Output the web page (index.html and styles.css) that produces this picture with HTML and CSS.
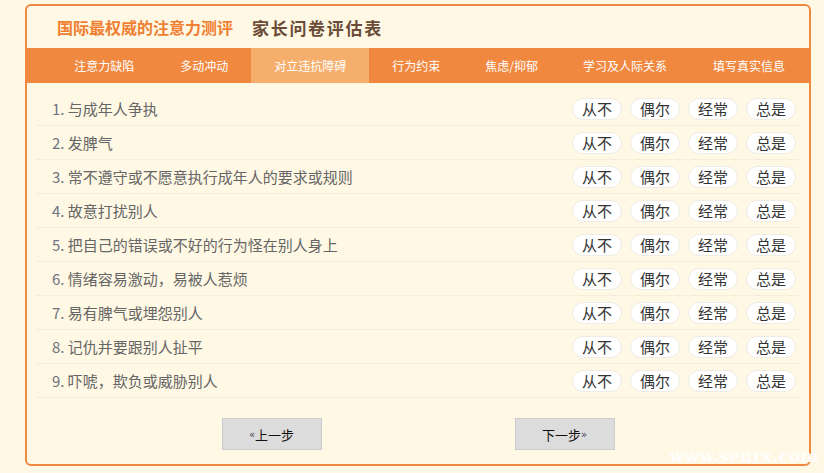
FILE: index.html
```html
<!DOCTYPE html>
<html lang="zh">
<head>
<meta charset="utf-8">
<title>家长问卷评估表</title>
<link rel="stylesheet" href="styles.css">
</head>
<body>
<div class="card">
  <div class="header">
    <span class="brand">国际最权威的注意力测评</span>
    <span class="title">家长问卷评估表</span>
  </div>
  <div class="nav">
    <span class="tab">注意力缺陷</span>
    <span class="tab">多动冲动</span>
    <span class="tab active">对立违抗障碍</span>
    <span class="tab">行为约束</span>
    <span class="tab tight">焦虑/抑郁</span>
    <span class="tab">学习及人际关系</span>
    <span class="tab">填写真实信息</span>
  </div>
  <div class="list">
    <div class="row"><span class="q"><span class="num">1.</span> 与成年人争执</span><span class="opts"><span class="pill">从不</span><span class="pill">偶尔</span><span class="pill">经常</span><span class="pill">总是</span></span></div>
    <div class="row"><span class="q"><span class="num">2.</span> 发脾气</span><span class="opts"><span class="pill">从不</span><span class="pill">偶尔</span><span class="pill">经常</span><span class="pill">总是</span></span></div>
    <div class="row"><span class="q"><span class="num">3.</span> 常不遵守或不愿意执行成年人的要求或规则</span><span class="opts"><span class="pill">从不</span><span class="pill">偶尔</span><span class="pill">经常</span><span class="pill">总是</span></span></div>
    <div class="row"><span class="q"><span class="num">4.</span> 故意打扰别人</span><span class="opts"><span class="pill">从不</span><span class="pill">偶尔</span><span class="pill">经常</span><span class="pill">总是</span></span></div>
    <div class="row"><span class="q"><span class="num">5.</span> 把自己的错误或不好的行为怪在别人身上</span><span class="opts"><span class="pill">从不</span><span class="pill">偶尔</span><span class="pill">经常</span><span class="pill">总是</span></span></div>
    <div class="row"><span class="q"><span class="num">6.</span> 情绪容易激动，易被人惹烦</span><span class="opts"><span class="pill">从不</span><span class="pill">偶尔</span><span class="pill">经常</span><span class="pill">总是</span></span></div>
    <div class="row"><span class="q"><span class="num">7.</span> 易有脾气或埋怨别人</span><span class="opts"><span class="pill">从不</span><span class="pill">偶尔</span><span class="pill">经常</span><span class="pill">总是</span></span></div>
    <div class="row"><span class="q"><span class="num">8.</span> 记仇并要跟别人扯平</span><span class="opts"><span class="pill">从不</span><span class="pill">偶尔</span><span class="pill">经常</span><span class="pill">总是</span></span></div>
    <div class="row"><span class="q"><span class="num">9.</span> 吓唬，欺负或威胁别人</span><span class="opts"><span class="pill">从不</span><span class="pill">偶尔</span><span class="pill">经常</span><span class="pill">总是</span></span></div>
  </div>
  <div class="footer">
    <button class="btn"><span class="arr">«</span>上一步</button>
    <button class="btn">下一步<span class="arr">»</span></button>
  </div>
  <div class="watermark">www.senrx.com</div>
</div>
</body>
</html>
```
FILE: styles.css
```css
html, body {
  margin: 0;
  padding: 0;
  background: #fff8e4;
}
body {
  font-family: "Noto Sans CJK SC", "Noto Sans", sans-serif;
  padding: 4px 0 0 25px;
}
.card {
  position: relative;
  width: 782px;
  height: 458px;
  border: 2px solid #f0883f;
  border-radius: 6px;
  background: #fff8e4;
  display: flex;
  flex-direction: column;
}
.header {
  height: 42px;
  display: flex;
  align-items: center;
  padding-left: 30px;
  gap: 19px;
}
.brand {
  color: #ef7f32;
  font-size: 16px;
  font-weight: bold;
}
.title {
  color: #6b4c38;
  font-size: 17px;
  font-weight: bold;
  letter-spacing: 1.7px;
}
.nav {
  height: 35px;
  background: #f0883f;
  display: flex;
  justify-content: flex-end;
  padding-right: 1px;
}
.tab {
  padding: 0 23px;
  line-height: 35px;
  font-size: 12px;
  color: #fff;
  white-space: nowrap;
}
.tab.tight {
  padding: 0 22px;
}
.tab.active {
  background: #f5ae6b;
}
.list {
  margin: 9px 9px 0 10px;
}
.row {
  height: 33px;
  border-bottom: 1px dotted #ece3cc;
  display: flex;
  align-items: center;
  justify-content: space-between;
  padding-left: 15px;
  padding-right: 4px;
}
.q {
  font-size: 15px;
  color: #666;
}
.num {
  color: #6f7380;
}
.opts {
  display: flex;
  gap: 8px;
}
.pill {
  width: 48px;
  height: 20px;
  border: 1px solid #f0ece4;
  border-radius: 11px;
  background: #fff;
  font-size: 15px;
  color: #333;
  display: flex;
  align-items: center;
  justify-content: center;
}
.footer {
  margin-top: 20px;
  display: flex;
  justify-content: center;
  gap: 193px;
}
.btn {
  width: 100px;
  height: 32px;
  background: #dcdcdc;
  border: 1px solid #cccccc;
  font-family: "Noto Sans CJK SC", sans-serif;
  font-size: 13px;
  color: #111;
  padding: 0;
  display: flex;
  align-items: center;
  justify-content: center;
}
.arr {
  font-family: "DejaVu Sans", sans-serif;
  font-size: 10px;
  color: #445;
}
.watermark {
  position: absolute;
  right: -10px;
  bottom: -2px;
  font-family: "DejaVu Serif", "Liberation Serif", serif;
  font-weight: bold;
  font-size: 17px;
  color: rgba(255, 255, 255, 0.95);
  letter-spacing: 0.3px;
}
```
